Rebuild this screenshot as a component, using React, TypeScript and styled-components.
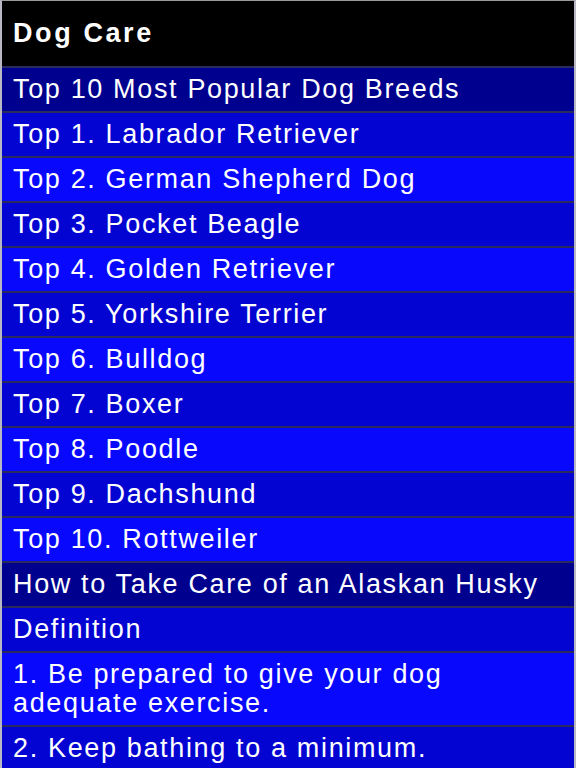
import styled, { createGlobalStyle } from 'styled-components';

const GlobalStyle = createGlobalStyle`
  html, body {
    margin: 0;
    padding: 0;
    background: #ffffff;
  }
  body {
    font-family: "Liberation Sans", Arial, Helvetica, sans-serif;
  }
`;

type Tone = 'title' | 'section' | 'dark' | 'bright';

const colors: Record<Tone, string> = {
  title: '#000000',
  section: '#00008e',
  dark: '#0404d2',
  bright: '#0808fc',
};

const Page = styled.div`
  width: 576px;
  height: 768px;
  box-sizing: border-box;
  overflow: hidden;
  border-top: 1px solid #9a9a9a;
  border-left: 2px solid #b8b8c4;
  border-right: 2px solid #b8b8c4;
  background: #0404d2;
  display: flex;
  flex-direction: column;
`;

const Row = styled.div<{ $tone: Tone; $tall?: boolean }>`
  flex: none;
  box-sizing: border-box;
  min-height: ${(p) => (p.$tone === 'title' ? '67px' : p.$tall ? '74px' : '45px')};
  display: flex;
  align-items: center;
  padding: 0 8px 0 11px;
  background: ${(p) => colors[p.$tone]};
  border-bottom: 2px solid #2a2a5c;
  color: #ffffff;
  font-size: 27px;
  line-height: 29px;
  letter-spacing: ${(p) => (p.$tone === 'title' ? '2.6px' : '1.65px')};
  font-weight: ${(p) => (p.$tone === 'title' ? 700 : 400)};
`;

const items: { text: string; tone: Tone; tall?: boolean }[] = [
  { text: 'Top 10 Most Popular Dog Breeds', tone: 'section' },
  { text: 'Top 1. Labrador Retriever', tone: 'dark' },
  { text: 'Top 2. German Shepherd Dog', tone: 'bright' },
  { text: 'Top 3. Pocket Beagle', tone: 'dark' },
  { text: 'Top 4. Golden Retriever', tone: 'bright' },
  { text: 'Top 5. Yorkshire Terrier', tone: 'dark' },
  { text: 'Top 6. Bulldog', tone: 'bright' },
  { text: 'Top 7. Boxer', tone: 'dark' },
  { text: 'Top 8. Poodle', tone: 'bright' },
  { text: 'Top 9. Dachshund', tone: 'dark' },
  { text: 'Top 10. Rottweiler', tone: 'bright' },
  { text: 'How to Take Care of an Alaskan Husky', tone: 'section' },
  { text: 'Definition', tone: 'dark' },
  { text: '1. Be prepared to give your dog adequate exercise.', tone: 'bright', tall: true },
  { text: '2. Keep bathing to a minimum.', tone: 'dark' },
];

export default function App() {
  return (
    <>
      <GlobalStyle />
      <Page>
        <Row $tone="title">Dog Care</Row>
        {items.map((item) => (
          <Row key={item.text} $tone={item.tone} $tall={item.tall}>
            {item.text}
          </Row>
        ))}
      </Page>
    </>
  );
}
